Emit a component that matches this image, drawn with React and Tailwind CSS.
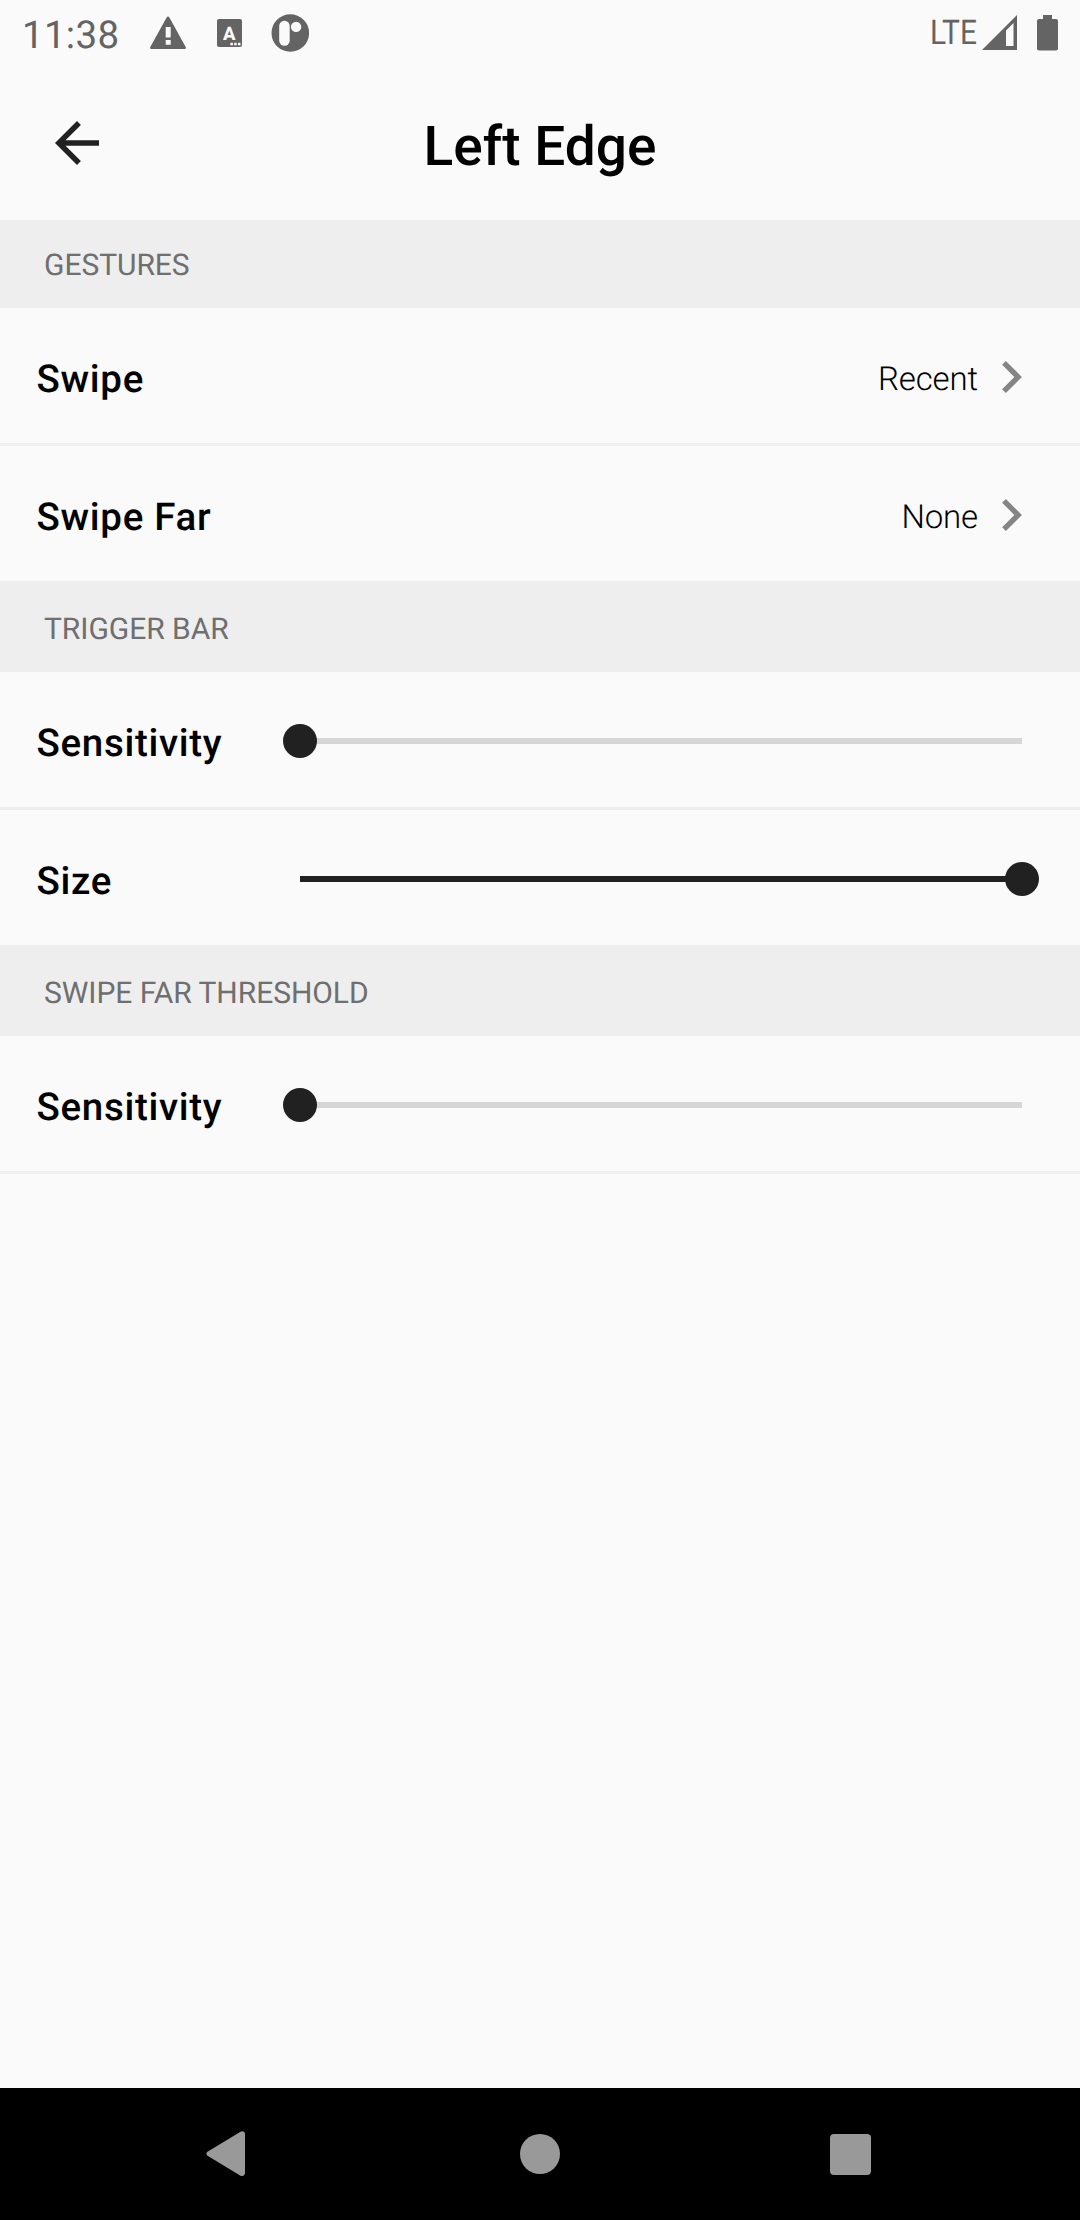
function StatusBar() {
  return (
    <div className="flex h-[66px] shrink-0 items-start text-[#646464]">
      <span className="ml-[22px] mt-[13px] w-[128px] text-[38.5px] leading-[45px] tracking-[0.3px]">11:38</span>
      <svg className="mt-[16px] h-[33px] w-[36px]" viewBox="0 0 36 33" fill="currentColor">
        <path fillRule="evenodd" d="M18 .5q.8 0 1.4 1L35.7 31q.7 2-1 2H1.300q-1.700 0-1-2L16.600 1.500q.6-1 1.400-1zM15.700 11v10.500h5V11zM15.700 24v4.700h5V24z" />
      </svg>
      <svg className="ml-[31px] mt-[19px] h-[28px] w-[25px]" viewBox="0 0 25 28" fill="currentColor">
        <rect width="25" height="28" rx="2" />
        <text x="12.300" y="20.900" textAnchor="middle" fontSize="18.500" fontWeight="800" fill="#fafafa">A</text>
        <rect x="13.400" y="23.800" width="2.500" height="2.500" fill="#fafafa" />
        <rect x="17.200" y="23.800" width="2.500" height="2.500" fill="#fafafa" />
        <rect x="21" y="23.800" width="2.500" height="2.500" fill="#fafafa" />
      </svg>
      <svg className="ml-[29px] mt-[14px] h-[38px] w-[38px]" viewBox="0 0 38 38" fill="currentColor">
        <circle cx="19.300" cy="19" r="18.800" />
        <rect x="8.200" y="6.800" width="10.500" height="25" rx="5.200" fill="#fafafa" />
        <circle cx="25.100" cy="12.900" r="5.200" fill="#fafafa" />
      </svg>
      <div className="grow" />
      <span className="mt-[13px] w-[52px] origin-left scale-x-[0.88] text-[34px] leading-[40px]">LTE</span>
      <svg className="mt-[15px] h-[35px] w-[35px]" viewBox="0 0 35 35" fill="currentColor">
        <path fillRule="evenodd" d="M0 35 35 0V35zM24 15.500V31h7.500V8z" />
      </svg>
      <svg className="ml-[20px] mr-[22px] mt-[15px] h-[36px] w-[21px]" viewBox="0 0 21 36" fill="currentColor">
        <rect x="6" y="0" width="9" height="6" />
        <rect x="0" y="4" width="21" height="31.500" rx="2" />
      </svg>
    </div>
  );
}

function Header() {
  return (
    <header className="grid h-[154px] shrink-0 grid-cols-[1fr_auto_1fr] items-start">
      <svg className="ml-[44px] mt-[44px] size-[66px]" viewBox="0 0 24 24" fill="#212121">
        <path d="M20 11H7.830l5.590-5.590L12 4l-8 8 8 8 1.410-1.410L7.830 13H20z" />
      </svg>
      <h1 className="mt-[49px] text-[55px] font-medium leading-[64px] text-black">Left Edge</h1>
    </header>
  );
}

function SectionTitle({ children }) {
  return (
    <h2 className="flex h-[88px] items-center bg-[#eeeeee] pl-[44px] pt-[3px] text-[30px] leading-[45px] tracking-[-0.05px] text-[#6f6f6f]">
      {children}
    </h2>
  );
}

function Row({ label, children }) {
  return (
    <div className="flex h-[138px] items-center pl-[36.5px] shadow-[inset_0_-3px_0_#eeeeee]">
      <span className="w-[263.5px] pt-[5px] text-[38.5px] font-medium leading-[45px] tracking-[0.7px] text-black">{label}</span>
      {children}
    </div>
  );
}

function Choice({ value }) {
  return (
    <div className="flex grow items-center justify-end pr-[58px] text-black">
      <span className="mr-[24px] pt-[5px] text-[33px] font-light leading-[39px] tracking-[-0.15px]">{value}</span>
      <svg className="h-[32px] w-[20px]" viewBox="8.590 6 7.410 12" fill="#858585">
        <path d="M10 6 8.590 7.410 13.170 12l-4.580 4.590L10 18l6-6z" />
      </svg>
    </div>
  );
}

function Slider({ full }) {
  return (
    <div className={`mr-[58px] flex h-[6px] grow items-center ${full ? "justify-end bg-[#212121]" : "justify-start bg-[#d6d6d6]"}`}>
      <div className={`size-[34px] shrink-0 rounded-full bg-[#212121] ${full ? "-mr-[17px]" : "-ml-[17px]"}`} />
    </div>
  );
}

function NavBar() {
  return (
    <nav className="flex h-[132px] shrink-0 items-center justify-between bg-black pl-[206px] pr-[209px] text-[#999999]">
      <svg className="h-[46px] w-[40px]" viewBox="0 0 40 46" fill="currentColor">
        <path d="M1.500 20.700 34.500.800Q38-.8 39 2.500V42.500Q38 46 34.500 44.700L1.500 24.800Q-.8 22.700 1.500 20.700z" />
      </svg>
      <div className="ml-[4px] size-[40px] rounded-full bg-[#999999]" />
      <div className="mt-px size-[41px] rounded-[4px] bg-[#999999]" />
    </nav>
  );
}

export default function App() {
  return (
    <div className="flex h-[2220px] w-[1080px] flex-col overflow-hidden bg-[#fafafa] font-['Roboto',sans-serif] [text-rendering:geometricPrecision]">
      <StatusBar />
      <Header />
      <main className="grow">
        <SectionTitle>GESTURES</SectionTitle>
        <Row label="Swipe"><Choice value="Recent" /></Row>
        <Row label="Swipe Far"><Choice value="None" /></Row>
        <SectionTitle>TRIGGER BAR</SectionTitle>
        <Row label="Sensitivity"><Slider /></Row>
        <Row label="Size"><Slider full /></Row>
        <SectionTitle>SWIPE FAR THRESHOLD</SectionTitle>
        <Row label="Sensitivity"><Slider /></Row>
      </main>
      <NavBar />
    </div>
  );
}
